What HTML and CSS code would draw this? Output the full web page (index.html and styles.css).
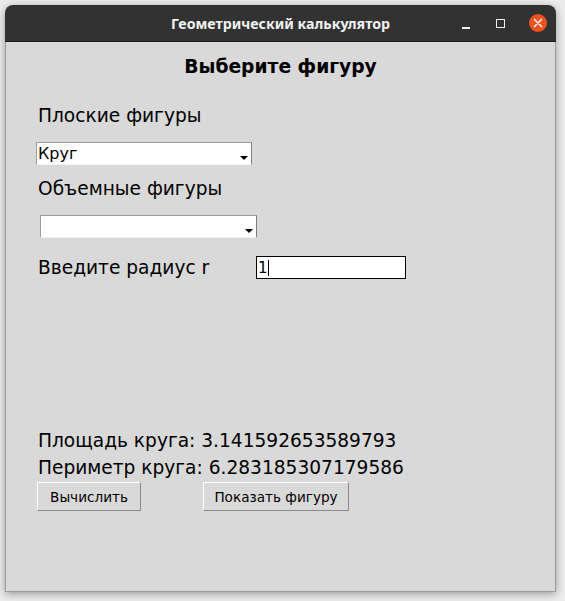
FILE: index.html
```html
<!DOCTYPE html>
<html lang="ru">
<head>
<meta charset="utf-8">
<title>Геометрический калькулятор</title>
<link rel="stylesheet" href="styles.css">
</head>
<body>
<div class="window">
  <div class="titlebar">
    <span class="title">Геометрический калькулятор</span>
    <div class="controls">
      <span class="ctl ctl-min"></span>
      <span class="ctl ctl-max"></span>
      <span class="ctl ctl-close">
        <svg width="18" height="18" viewBox="0 0 18 18"><circle cx="9" cy="9" r="9" fill="#e95420"/><path d="M5.5 5.5 L12.5 12.5 M12.5 5.5 L5.5 12.5" stroke="#fff" stroke-width="1.4" stroke-linecap="round"/></svg>
      </span>
    </div>
  </div>
  <div class="content">
    <div class="heading">Выберите фигуру</div>
    <div class="label label-flat">Плоские фигуры</div>
    <div class="combo combo-flat"><span class="combo-text">Круг</span><span class="arrow"></span></div>
    <div class="label label-solid">Объемные фигуры</div>
    <div class="combo combo-solid"><span class="combo-text"></span><span class="arrow"></span></div>
    <div class="input-row">
      <span class="label">Введите радиус r</span>
      <span class="entry">1<span class="caret"></span></span>
    </div>
    <div class="results">
      <div>Площадь круга: 3.141592653589793</div>
      <div>Периметр круга: 6.283185307179586</div>
    </div>
    <div class="buttons">
      <span class="btn btn-calc">Вычислить</span>
      <span class="btn btn-show">Показать фигуру</span>
    </div>
  </div>
</div>
</body>
</html>
```
FILE: styles.css
```css
html, body {
  margin: 0;
  padding: 0;
  background: #ececec;
  width: 565px;
  height: 601px;
  overflow: hidden;
}
.window {
  margin: 5px 0 0 5px;
  width: 551px;
  height: 587px;
  display: flex;
  flex-direction: column;
  border-radius: 8px 8px 0 0;
  box-shadow: 0 2px 8px rgba(0,0,0,0.35);
  overflow: hidden;
}
.titlebar {
  height: 36px;
  background: #323232;
  border-bottom: 1px solid #1c1c1c;
  display: flex;
  align-items: center;
  justify-content: center;
  position: relative;
  flex: none;
}
.title {
  color: #f2f2f2;
  font-family: "Noto Sans", "DejaVu Sans", sans-serif;
  font-weight: bold;
  font-size: 14.2px;
}
.controls {
  position: absolute;
  right: 9px;
  top: 0;
  height: 36px;
  display: flex;
  align-items: center;
}
.ctl {
  display: flex;
  align-items: center;
  justify-content: center;
}
.ctl-min {
  width: 8px;
  height: 2px;
  background: #f0f0f0;
  margin-top: 9px;
  margin-right: 26px;
}
.ctl-max {
  width: 7px;
  height: 7px;
  border: 1px solid #f0f0f0;
  margin-right: 24px;
}
.ctl-close {
  width: 18px;
  height: 18px;
}
.content {
  flex: 1;
  background: #d9d9d9;
  border: 1px solid #9a9a9a;
  border-top: none;
  font-family: "DejaVu Sans", sans-serif;
  color: #000;
  display: flex;
  flex-direction: column;
  align-items: flex-start;
}
.heading {
  align-self: stretch;
  text-align: center;
  font-weight: bold;
  font-size: 18.7px;
  line-height: 20px;
  margin-top: 15px;
}
.label {
  font-size: 18.6px;
  line-height: 20px;
}
.label-flat {
  margin-top: 29px;
  margin-left: 32px;
}
.combo {
  background: #fff;
  box-sizing: border-box;
  height: 23px;
  border: 1px solid;
  border-color: #9c9c9c #7e7e7e #f4f4f4 #9c9c9c;
  display: flex;
  align-items: center;
  justify-content: space-between;
}
.combo-flat {
  margin-top: 16px;
  margin-left: 30px;
  width: 216px;
}
.combo-solid {
  margin-top: 16px;
  margin-left: 34px;
  width: 217px;
}
.combo-text {
  font-size: 16px;
  padding-left: 1px;
}
.arrow {
  width: 0;
  height: 0;
  border-left: 4px solid transparent;
  border-right: 4px solid transparent;
  border-top: 4px solid #000;
  margin-right: 3px;
  margin-top: 9px;
}
.label-solid {
  margin-top: 14px;
  margin-left: 32px;
}
.input-row {
  margin-top: 18px;
  margin-left: 32px;
  display: flex;
  align-items: center;
}
.input-row .label {
  width: 218px;
}
.entry {
  box-sizing: border-box;
  width: 150px;
  height: 23px;
  background: #fff;
  border: 1px solid #000;
  font-size: 15px;
  display: flex;
  align-items: center;
  padding-left: 1px;
}
.caret {
  width: 1px;
  height: 16px;
  background: #000;
}
.results {
  margin-top: 148px;
  margin-left: 32px;
  font-size: 18.6px;
  line-height: 27px;
}
.buttons {
  margin-top: 1px;
  margin-left: 31px;
  display: flex;
  gap: 62px;
}
.btn {
  box-sizing: border-box;
  height: 29px;
  display: flex;
  align-items: center;
  justify-content: center;
  font-size: 13.6px;
  border: 1px solid;
  border-color: #ffffff #8a8a8a #8a8a8a #ffffff;
  background: #d9d9d9;
}
.btn-calc { width: 104px; }
.btn-show { width: 146px; }
```
